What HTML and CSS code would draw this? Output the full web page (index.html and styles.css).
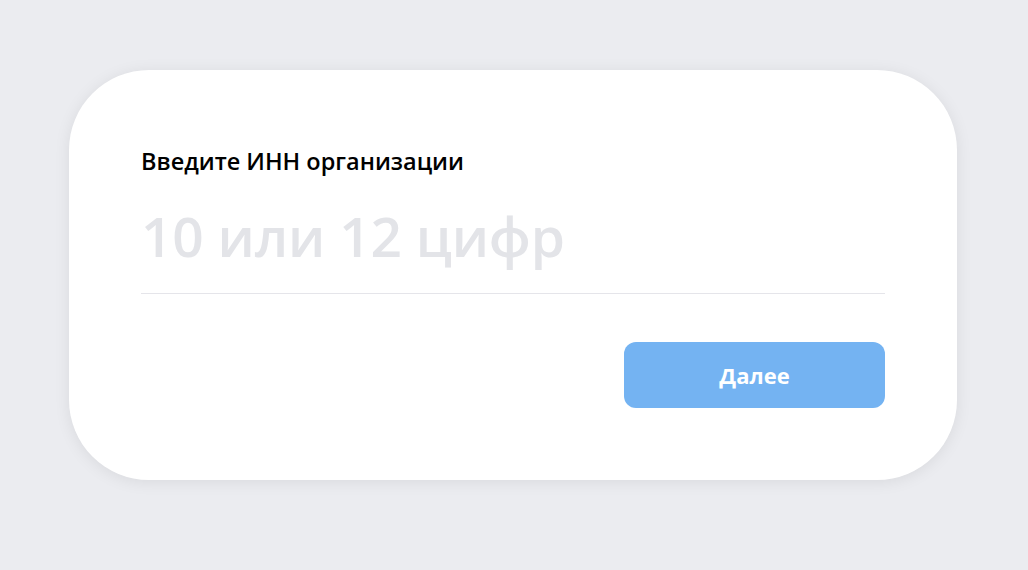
FILE: index.html
```html
<!DOCTYPE html>
<html lang="ru">
<head>
<meta charset="utf-8">
<link rel="stylesheet" href="styles.css">
</head>
<body>
<main class="page">
  <section class="card">
    <label class="title" for="inn">Введите ИНН организации</label>
    <input class="inn-input" id="inn" type="text" placeholder="10 или 12 цифр">
    <div class="actions">
      <button class="next-btn" type="button">Далее</button>
    </div>
  </section>
</main>
</body>
</html>
```
FILE: styles.css
```css
* { box-sizing: border-box; }
html, body { margin: 0; padding: 0; }
body {
  background: #ebecf0;
  font-family: "Open Sans", "Noto Sans", sans-serif;
  width: 1028px;
  height: 570px;
  overflow: hidden;
}
.page {
  padding: 70px 0 0 69px;
}
.card {
  width: 888px;
  height: 410px;
  background: #fff;
  border-radius: 80px;
  box-shadow: 0 2px 16px rgba(0, 0, 0, 0.08);
  padding: 75px 72px 0 72px;
  display: flex;
  flex-direction: column;
}
.title {
  font-size: 23.5px;
  font-weight: 600;
  color: #000;
  line-height: 32px;
  display: block;
}
.inn-input {
  margin-top: 19px;
  border: none;
  border-bottom: 1px solid #e5e5ea;
  outline: none;
  font-family: inherit;
  font-size: 55px;
  font-weight: 600;
  letter-spacing: -0.2px;
  color: #222;
  padding: 0 0 18px 0;
  height: 98px;
  line-height: 80px;
  width: 100%;
  background: transparent;
}
.inn-input::placeholder {
  color: #e3e4e8;
}
.actions {
  display: flex;
  justify-content: flex-end;
  margin-top: 48px;
}
.next-btn {
  width: 261px;
  height: 66px;
  border: none;
  border-radius: 12px;
  background: #74b3f2;
  color: #fff;
  font-family: inherit;
  font-size: 22px;
  font-weight: 700;
  cursor: pointer;
}
```
